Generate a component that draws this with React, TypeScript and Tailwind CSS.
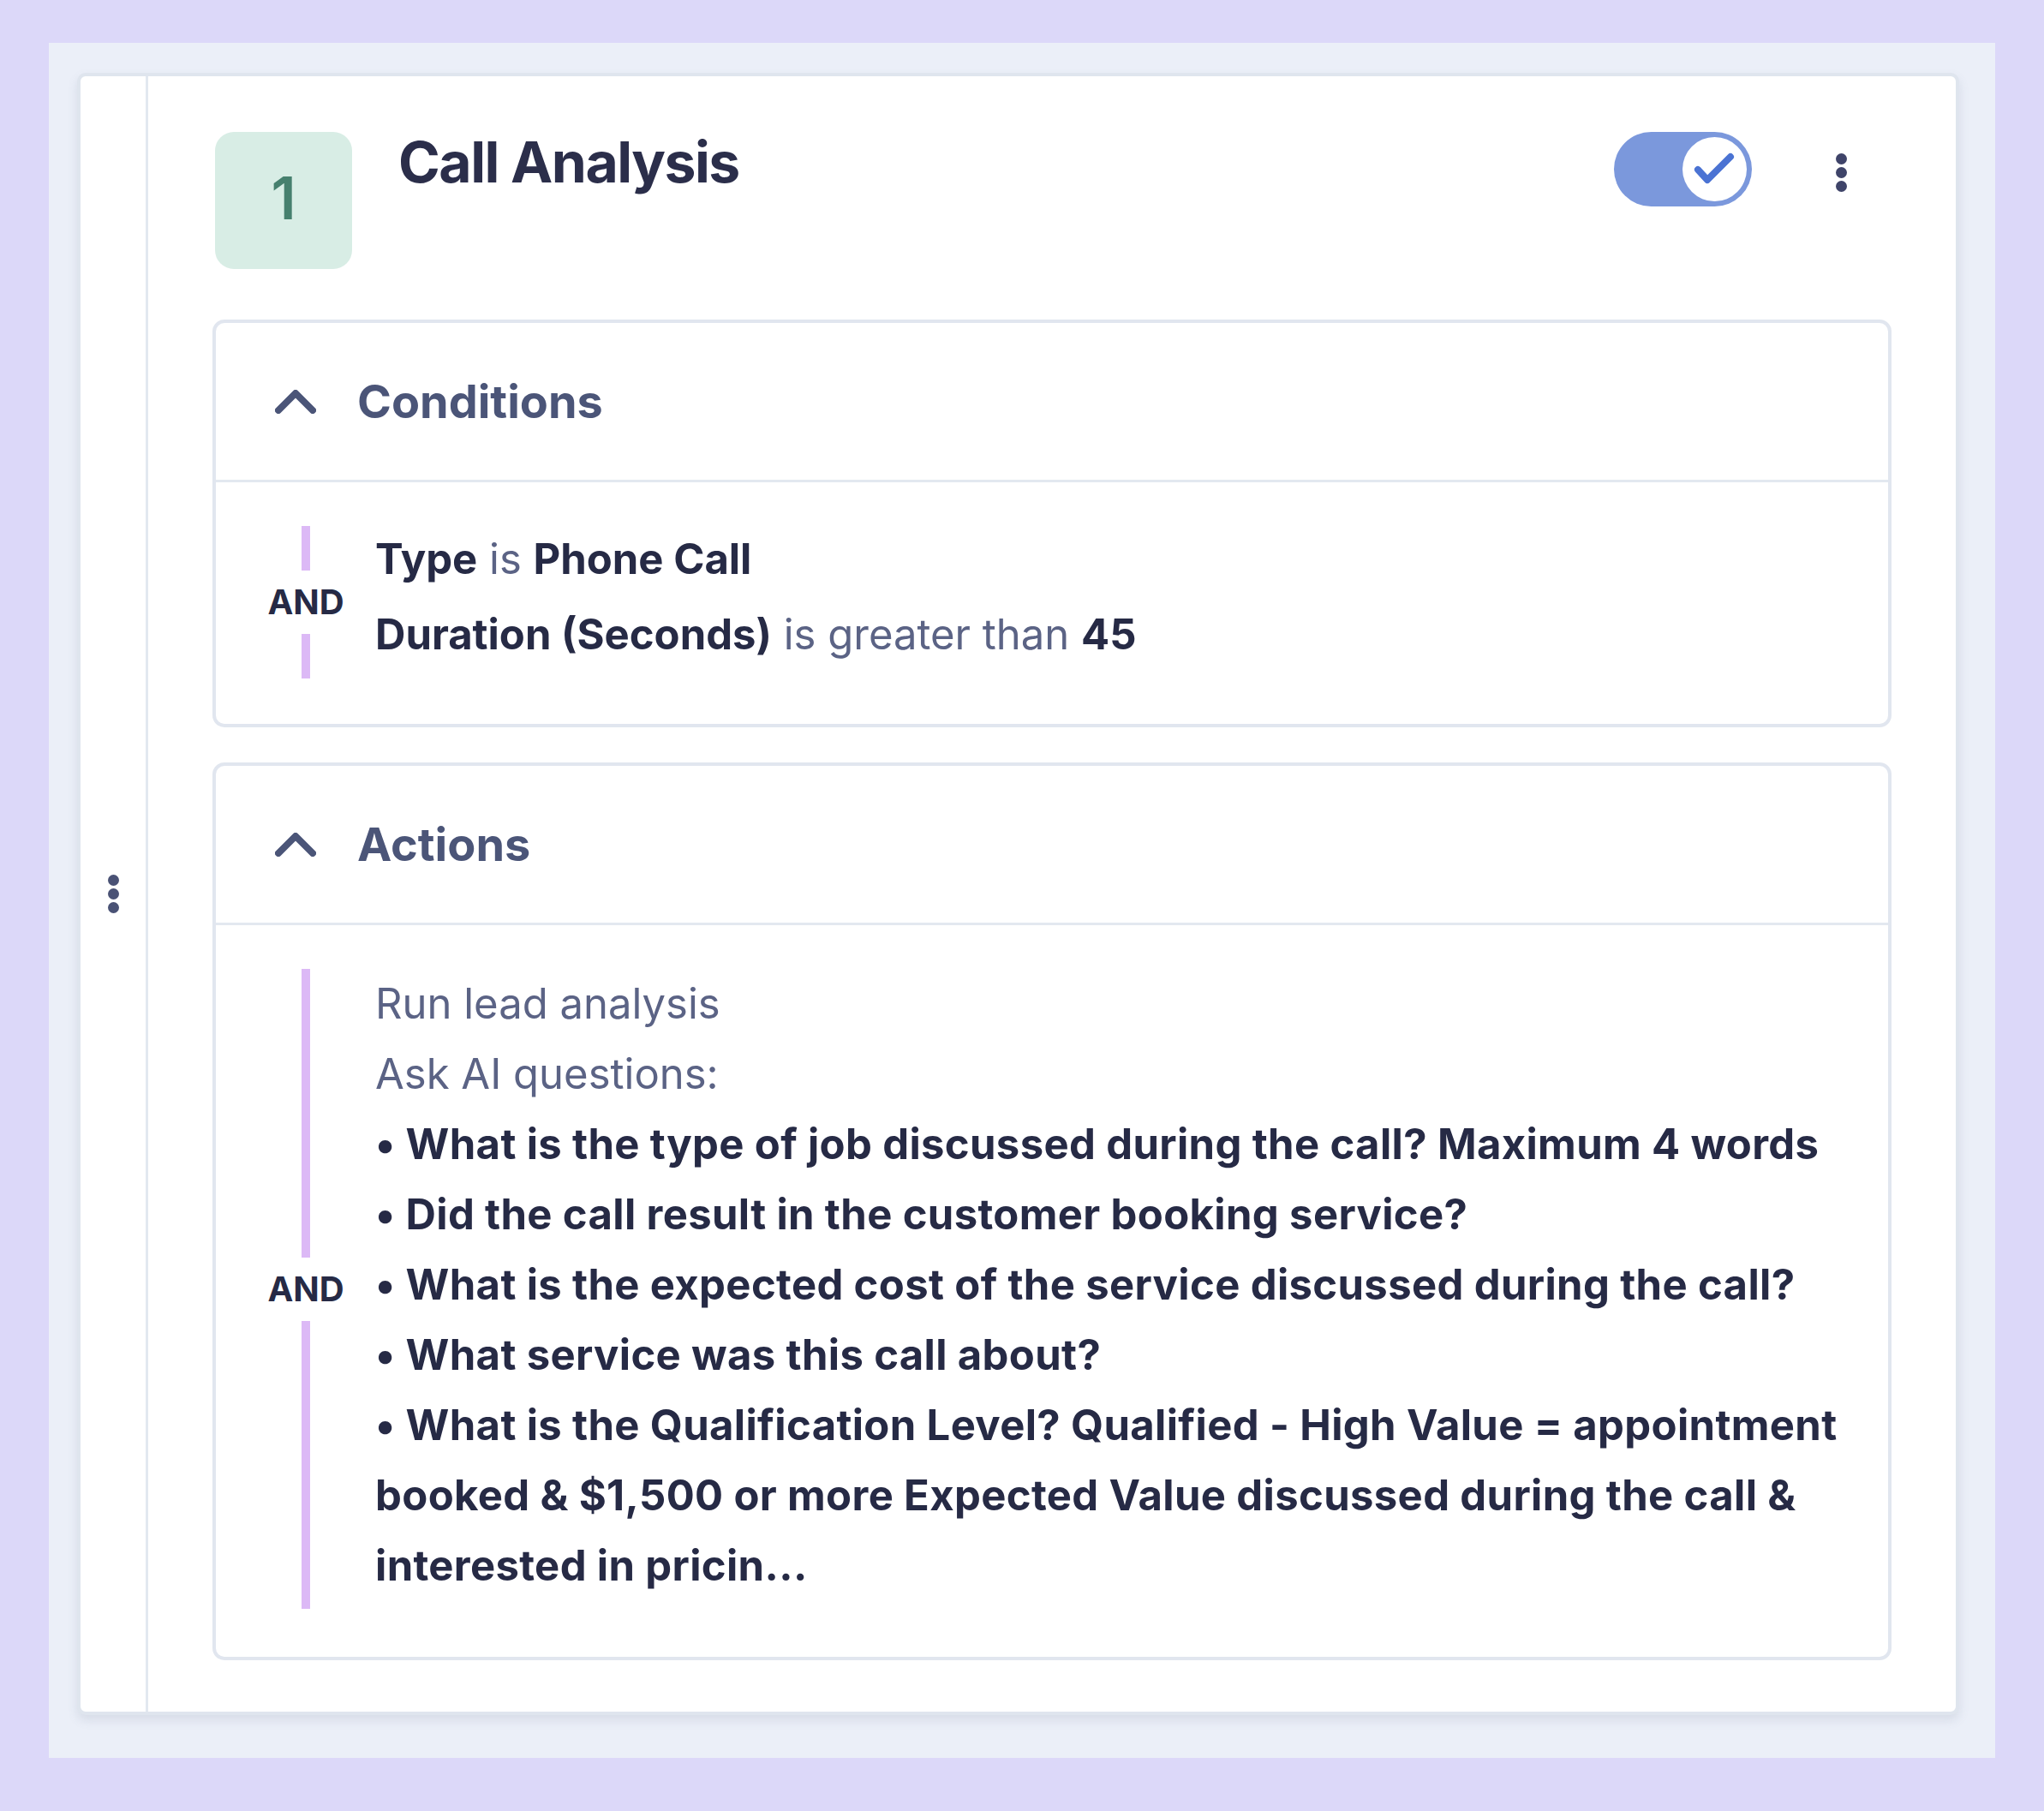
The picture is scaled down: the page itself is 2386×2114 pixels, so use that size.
import React from 'react';

const Kebab: React.FC<{ color: string }> = ({ color }) => (
  <div className="flex flex-col gap-[3px]">
    <span className={`block w-[13px] h-[13px] rounded-full ${color}`} />
    <span className={`block w-[13px] h-[13px] rounded-full ${color}`} />
    <span className={`block w-[13px] h-[13px] rounded-full ${color}`} />
  </div>
);

const Chevron: React.FC = () => (
  <svg width="48" height="28" viewBox="0 0 48 28" fill="none">
    <polyline points="4,24 24,4 44,24" stroke="#4b5578" strokeWidth="8" strokeLinecap="round" strokeLinejoin="round" />
  </svg>
);

// colonne "AND" avec les barres violettes
const AndRail: React.FC = () => (
  <div className="w-[88px] flex flex-col items-center shrink-0">
    <div className="w-[10px] flex-1 bg-[#dcb9f6]" />
    <div className="py-[17px] text-[40px] leading-[40px] font-bold text-[#262a45]">AND</div>
    <div className="w-[10px] flex-1 bg-[#dcb9f6]" />
  </div>
);

const Section: React.FC<{ title: string; bodyClass: string; children: React.ReactNode }> = ({ title, bodyClass, children }) => (
  <div className="rounded-[14px] border-[4px] border-[#e1e6ef] bg-white">
    <div className="h-[186px] flex items-center pl-[69px] gap-[48px] border-b-[3px] border-[#e3e8f0]">
      <Chevron />
      <span className="text-[54px] leading-none font-bold text-[#4b5578]">{title}</span>
    </div>
    <div className={`flex pl-[61px] pr-[40px] gap-[37px] ${bodyClass}`}>
      <AndRail />
      {children}
    </div>
  </div>
);

const questions = [
  'What is the type of job discussed during the call? Maximum 4 words',
  'Did the call result in the customer booking service?',
  'What is the expected cost of the service discussed during the call?',
  'What service was this call about?',
  'What is the Qualification Level? Qualified - High Value = appointment booked & $1,500 or more Expected Value discussed during the call & interested in pricin...',
];

export default function App() {
  return (
    <div className="min-h-screen bg-[#dcd8f9] pt-[50px] pl-[57px] font-['Inter',sans-serif]">
      <div className="w-[2272px] h-[2002px] bg-[#ebeff8] pt-[35px] pl-[33px]">
        <div className="w-[2197px] flex rounded-[10px] border-[4px] border-[#dfe5ee] bg-white shadow-[0_6px_12px_rgba(100,116,139,0.15)]">
          <div className="w-[79px] shrink-0 border-r-[3px] border-[#e2e8f0] flex items-center justify-center">
            <Kebab color="bg-[#4a5275]" />
          </div>

          <div className="flex-1 px-[75px] pt-[65px] pb-[60px]">
            <div className="flex items-start pr-[52px]">
              <div className="ml-[3px] w-[160px] h-[160px] rounded-[22px] bg-[#d8ede5] flex items-center justify-center">
                <span className="text-[69px] leading-none font-semibold text-[#46806e] -mt-[6px]">1</span>
              </div>
              <h1 className="ml-[54px] mt-[2px] text-[66px] leading-none font-bold tracking-[-1.5px] text-[#2b2e4a]">Call Analysis</h1>
              <div className="ml-auto flex items-center gap-[98px]">
                <div className="w-[161px] h-[87px] rounded-full bg-[#7b98dc] p-[6px] flex justify-end">
                  <div className="w-[75px] h-[75px] rounded-full bg-white">
                    <svg width="75" height="75" viewBox="0 0 75 75" fill="none">
                      <polyline points="18,38 29,50 56,23" stroke="#4b73d3" strokeWidth="8" strokeLinecap="round" strokeLinejoin="round" />
                    </svg>
                  </div>
                </div>
                <div className="mt-[8px]">
                  <Kebab color="bg-[#3f4469]" />
                </div>
              </div>
            </div>

            <div className="mt-[59px]">
              <Section title="Conditions" bodyClass="pt-[51px] pb-[53px]">
                <div className="flex flex-col gap-[16px] pt-[3px] pb-[15px] text-[49px] leading-[72px] text-[#5b6385]">
                  <p>
                    <b className="font-bold text-[#262a45]">Type</b> is <b className="font-bold text-[#262a45]">Phone Call</b>
                  </p>
                  <p>
                    <b className="font-bold text-[#262a45]">Duration (Seconds)</b> is greater than{' '}
                    <b className="font-bold text-[#262a45]">45</b>
                  </p>
                </div>
              </Section>
            </div>

            <div className="mt-[41px]">
              <Section title="Actions" bodyClass="pt-[51px] pb-[56px]">
                <div className="flex-1 pb-[9px] text-[49px] leading-[82px]">
                  <p className="text-[#5b6385]">Run lead analysis</p>
                  <p className="text-[#5b6385]">Ask AI questions:</p>
                  {questions.map((q) => (
                    <p key={q} className="font-bold tracking-[0.35px] text-[#262a45]">• {q}</p>
                  ))}
                </div>
              </Section>
            </div>
          </div>
        </div>
      </div>
    </div>
  );
}
